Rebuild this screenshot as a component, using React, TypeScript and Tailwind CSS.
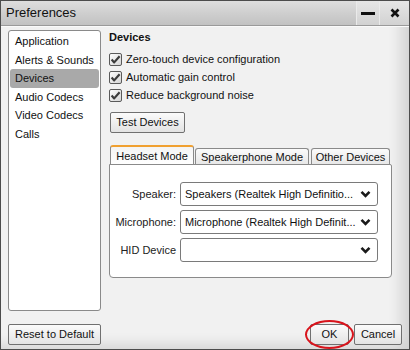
import React from "react";

const font = { fontFamily: '"Liberation Sans", Arial, sans-serif' };

const navItems = ["Application", "Alerts & Sounds", "Devices", "Audio Codecs", "Video Codecs", "Calls"];

const options = ["Zero-touch device configuration", "Automatic gain control", "Reduce background noise"];

function CheckBox() {
  return (
    <svg width="13" height="13" viewBox="0 0 13 13" className="shrink-0">
      <defs>
        <linearGradient id="cbg" x1="0" y1="0" x2="1" y2="1">
          <stop offset="0" stopColor="#ffffff" />
          <stop offset="1" stopColor="#d4d4d4" />
        </linearGradient>
      </defs>
      <rect x="0.5" y="0.5" width="12" height="12" rx="1.5" fill="url(#cbg)" stroke="#5a5a5a" />
      <path d="M2.6 6.6 L5.2 9.4 L10.6 3.2" fill="none" stroke="#3c3c3c" strokeWidth="2.2" strokeLinejoin="round" />
    </svg>
  );
}

function Chevron() {
  return (
    <svg width="11" height="8" viewBox="0 0 11 8" className="shrink-0">
      <path d="M1.5 1.8 L5.5 5.8 L9.5 1.8" fill="none" stroke="#1a1a1a" strokeWidth="2.6" />
    </svg>
  );
}

function Btn({ children, className = "" }: { children: React.ReactNode; className?: string }) {
  return (
    <div
      className={
        "h-[21px] flex items-center justify-center rounded-[2px] border border-[#707070] bg-gradient-to-b from-[#fbfbfb] to-[#e3e3e3] text-[11px] text-[#111] " +
        className
      }
    >
      {children}
    </div>
  );
}

function Select({ label, value }: { label: string; value: string }) {
  return (
    <>
      <div className="text-right text-[11px] text-[#222] leading-[24px]">{label}</div>
      <div className="h-[24px] flex items-center justify-between rounded-[3px] border border-[#7a7a7a] bg-white pl-[4px] pr-[6px] text-[11px] text-[#111]">
        <span className="truncate">{value}</span>
        <Chevron />
      </div>
    </>
  );
}

export default function App() {
  return (
    <div style={font} className="w-[410px] h-[350px] flex flex-col border border-[#4c4c4c] bg-[#f1f1f1] overflow-hidden">
      {/* Title bar */}
      <div className="h-[25px] flex items-stretch border-b border-[#9a9a9a] bg-gradient-to-b from-[#dedede] via-[#cfcfcf] to-[#c2c2c2]">
        <div className="flex-1 flex items-center pl-[5px] text-[13px] text-[#111]">Preferences</div>
        <div className="w-[23px] flex items-center justify-center border-l border-[#eaeaea] bg-gradient-to-b from-[#e6e6e6] to-[#d2d2d2]">
          <div className="w-[14px] h-[3px] bg-[#111]" />
        </div>
        <div className="w-[30px] flex items-center justify-center border-l border-[#eaeaea] bg-gradient-to-b from-[#e6e6e6] to-[#d2d2d2]">
          <svg width="10" height="10" viewBox="0 0 10 10">
            <path d="M1.5 1.5 L8.5 8.5 M8.5 1.5 L1.5 8.5" stroke="#111" strokeWidth="2.6" />
          </svg>
        </div>
      </div>

      {/* Body */}
      <div className="flex-1 flex flex-col border-t border-[#fafafa] shadow-[inset_-14px_-10px_14px_-6px_rgba(0,0,0,0.13)] pl-[7px] pr-[7px] pt-[3px] pb-[4px]">
        <div className="flex-1 flex gap-[8px]">
          {/* Left nav */}
          <div className="w-[93px] h-[281px] rounded-[3px] border border-[#8a8a8a] bg-white px-[1px] pt-[1px]">
            {navItems.map((item) => (
              <div
                key={item}
                className={
                  "h-[18.5px] flex items-center pl-[5px] rounded-[3px] text-[11px] text-[#111] " +
                  (item === "Devices" ? "bg-[#a9a9a9]" : "")
                }
              >
                {item}
              </div>
            ))}
          </div>

          {/* Right content */}
          <div className="flex-1 flex flex-col pr-[10px]">
            <div className="text-[11px] font-bold text-[#111] leading-[14px]">Devices</div>
            <div className="mt-[6px] flex flex-col">
              {options.map((o) => (
                <div key={o} className="h-[18px] flex items-center gap-[4px] text-[11px] text-[#111]">
                  <CheckBox />
                  <span>{o}</span>
                </div>
              ))}
            </div>
            <Btn className="mt-[8px] w-[75px] ml-[1px]">Test Devices</Btn>

            {/* Tabs */}
            <div className="mt-[12px] flex items-end pl-[1px] gap-[1px]">
              <div className="h-[20px] w-[84px] flex items-center justify-center rounded-t-[3px] border border-b-0 border-[#8a8a8a] border-t-2 border-t-[#f0a030] bg-gradient-to-b from-[#f4f4f4] to-[#ffffff] text-[11px] text-[#111]">
                Headset Mode
              </div>
              <div className="h-[17px] w-[114px] flex items-center justify-center rounded-t-[3px] border border-b-0 border-[#8a8a8a] bg-gradient-to-b from-[#fbfbfb] to-[#e6e6e6] text-[11px] text-[#111]">
                Speakerphone Mode
              </div>
              <div className="h-[17px] w-[79px] ml-[1px] flex items-center justify-center rounded-t-[3px] border border-b-0 border-[#8a8a8a] bg-gradient-to-b from-[#fbfbfb] to-[#e6e6e6] text-[11px] text-[#111]">
                Other Devices
              </div>
            </div>
            <div className="h-[114px] -mt-px w-[283px] rounded-b-[4px] rounded-tr-[2px] border border-[#8a8a8a] bg-white pt-[17px] pl-[4px] pr-[13px]">
              <div className="grid grid-cols-[62px_1fr] gap-x-[4px] gap-y-[4px]">
                <Select label="Speaker:" value="Speakers (Realtek High Definitio..." />
                <Select label="Microphone:" value="Microphone (Realtek High Definit..." />
                <Select label="HID Device" value="" />
              </div>
            </div>
          </div>
        </div>

        {/* Bottom buttons */}
        <div className="flex items-center justify-between">
          <Btn className="w-[93px]">Reset to Default</Btn>
          <div className="flex gap-[5px]">
            <div className="relative">
              <Btn className="w-[39px] border-[#1a3a8a]">OK</Btn>
              <div className="absolute -left-[5px] -top-[4px] w-[49px] h-[29px] rounded-[50%] border-[2.5px] border-[#d8141c]" />
            </div>
            <Btn className="w-[48px]">Cancel</Btn>
          </div>
        </div>
      </div>
    </div>
  );
}
